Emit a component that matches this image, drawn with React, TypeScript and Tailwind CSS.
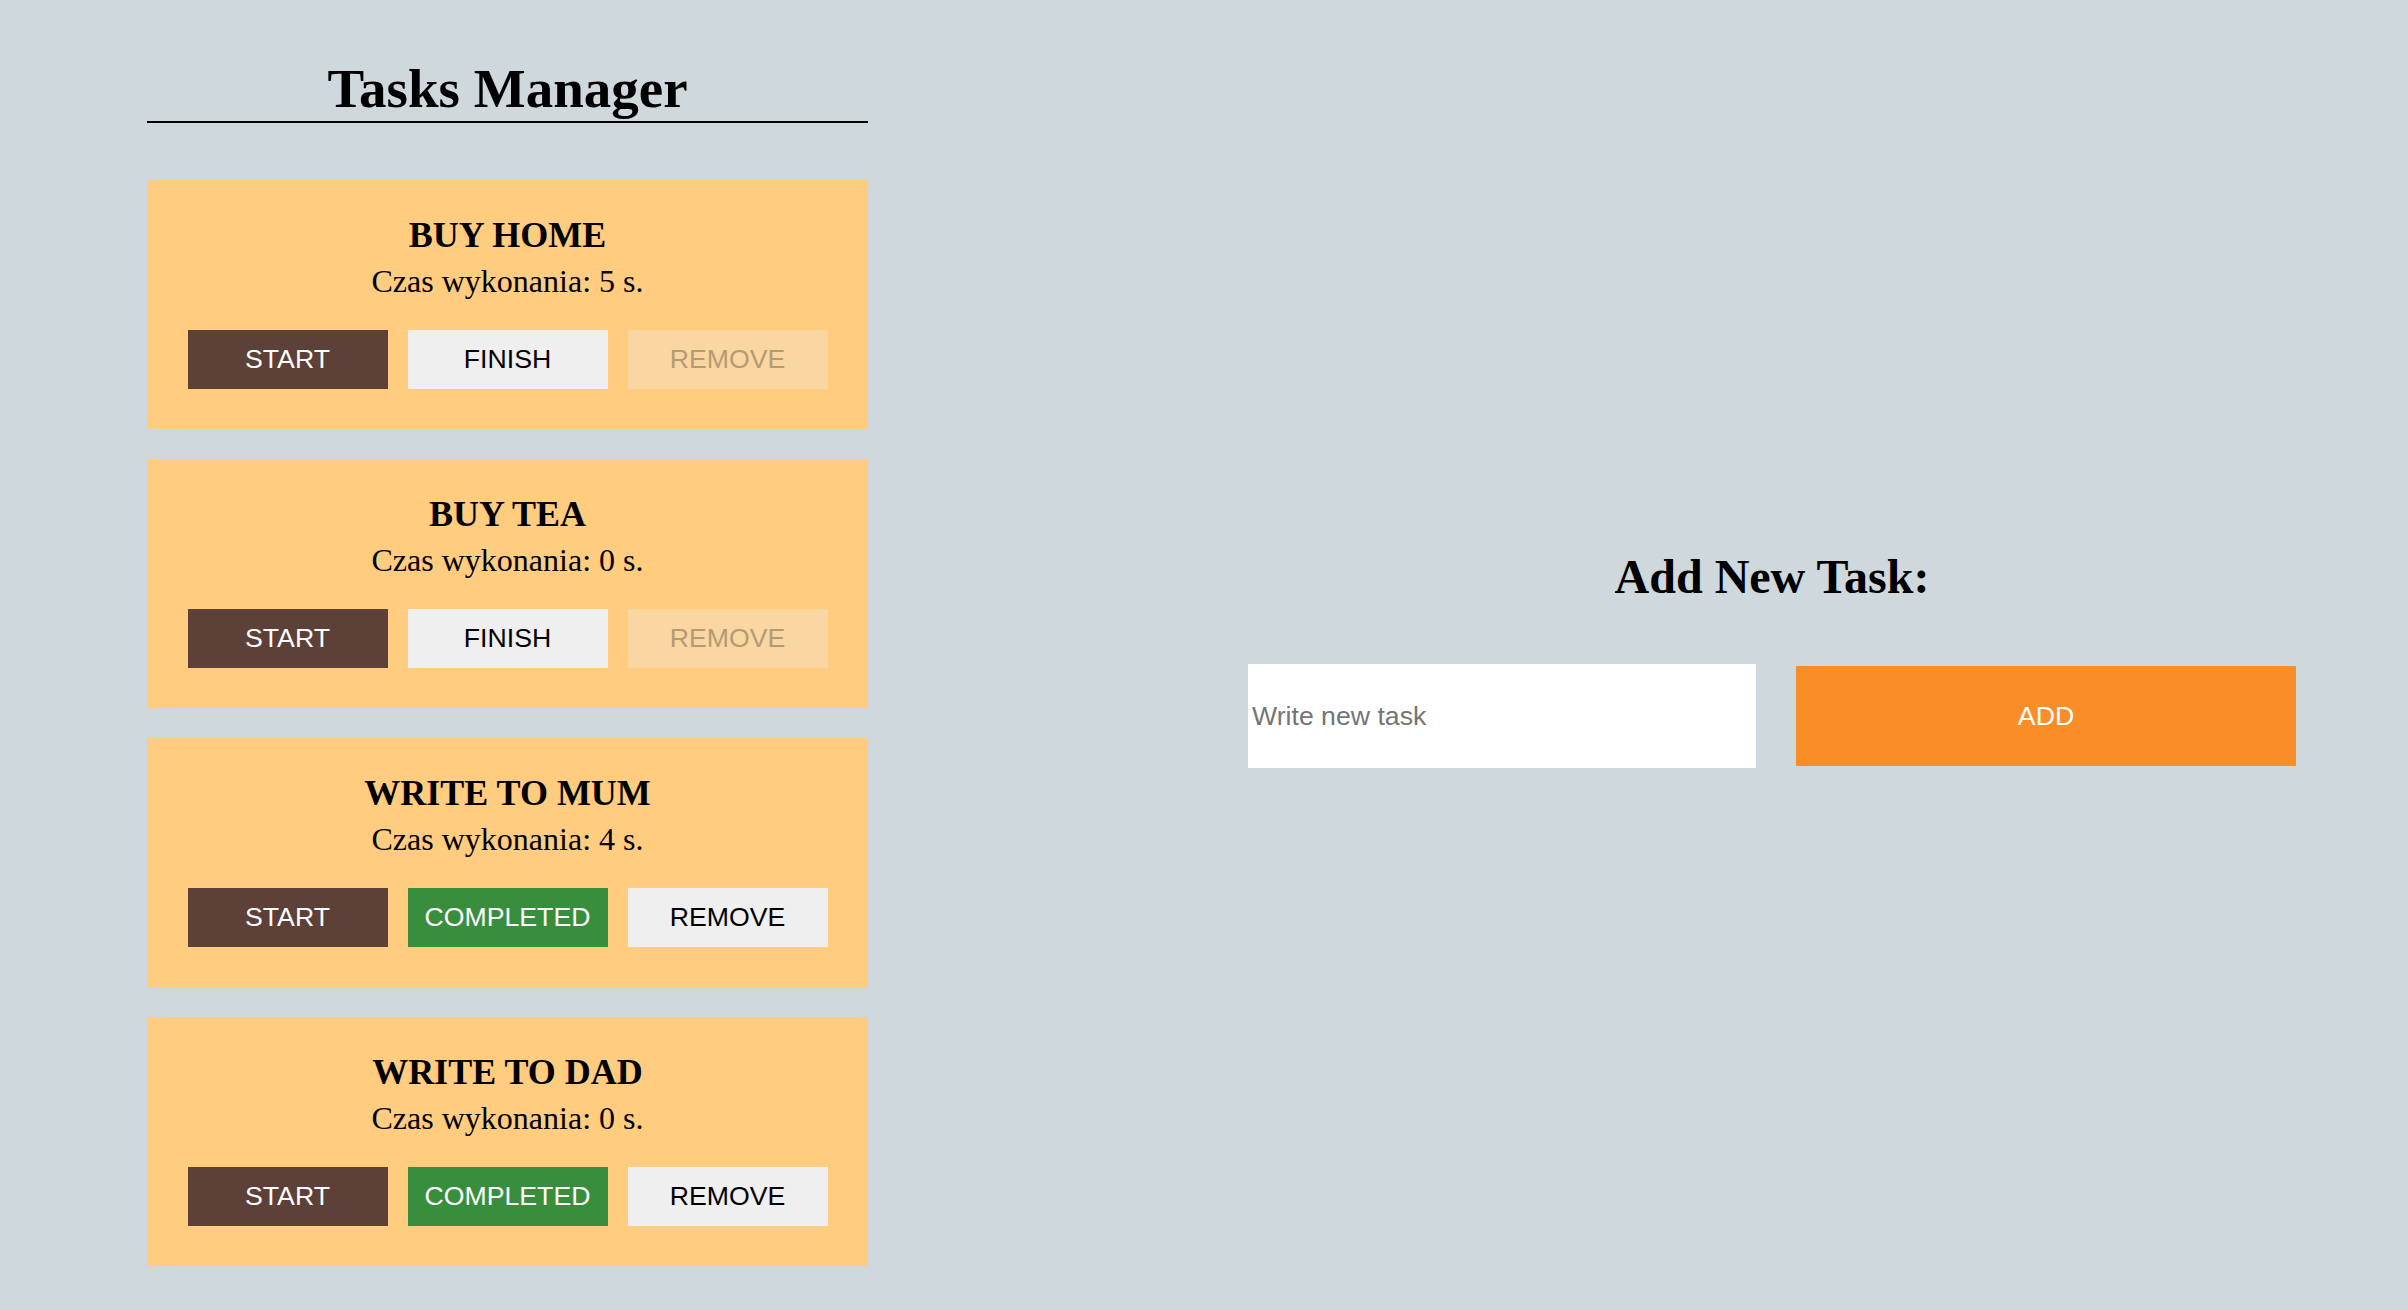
import { useState } from 'react';

// Shape of a single task shown in the list.
interface Task {
  id: number;
  name: string;
  time: number;
  status: 'idle' | 'completed';
}

const initialTasks: Task[] = [
  { id: 1, name: 'BUY HOME', time: 5, status: 'idle' },
  { id: 2, name: 'BUY TEA', time: 0, status: 'idle' },
  { id: 3, name: 'WRITE TO MUM', time: 4, status: 'completed' },
  { id: 4, name: 'WRITE TO DAD', time: 0, status: 'completed' },
];

const serif = "font-['Liberation_Serif','Times_New_Roman',serif]";
const sans = "font-['Liberation_Sans',Arial,sans-serif]";
const btn = `w-[200px] h-[59px] text-[26.67px] leading-none ${sans}`;

function TaskCard({ task }: { task: Task }) {
  const done = task.status === 'completed';
  return (
    <div className="bg-[#ffcc80] h-[249px] pt-[37px] flex flex-col items-center">
      <h3 className={`${serif} text-[36px] leading-none font-bold text-black`}>{task.name}</h3>
      <p className={`${serif} text-[32px] leading-none mt-[12px] text-black`}>
        Czas wykonania: {task.time} s.
      </p>
      <div className="flex gap-[20px] mt-[33px]">
        <button className={`${btn} bg-[#5d4037] text-white`}>START</button>
        {done ? (
          <button className={`${btn} bg-[#388e3c] text-white`}>COMPLETED</button>
        ) : (
          <button className={`${btn} bg-[#efefef] text-black`}>FINISH</button>
        )}
        {/* Remove is only available once the task is completed */}
        {done ? (
          <button className={`${btn} bg-[#efefef] text-black`}>REMOVE</button>
        ) : (
          <button disabled className={`${btn} bg-[#fad6a1] text-[#b49b76]`}>REMOVE</button>
        )}
      </div>
    </div>
  );
}

export default function App() {
  const [tasks] = useState<Task[]>(initialTasks);
  const [text, setText] = useState('');

  return (
    <div className="min-h-screen w-full bg-[#cfd8dc] flex text-black">
      {/* Left column: task list */}
      <div className="ml-[147px] w-[721px] shrink-0">
        <h1
          className={`${serif} mt-[61px] text-[55px] leading-none font-bold text-center pb-[5px] border-b-2 border-black`}
        >
          Tasks Manager
        </h1>
        <div className="mt-[57px] flex flex-col gap-[30px]">
          {tasks.map((task) => (
            <TaskCard key={task.id} task={task} />
          ))}
        </div>
      </div>

      {/* Right column: add form */}
      <div className="ml-[380px] w-[1048px] shrink-0 pt-[553px]">
        <h2 className={`${serif} text-[48px] leading-none font-bold text-center`}>Add New Task:</h2>
        <div className="mt-[63px] flex items-center gap-[40px]">
          <input
            value={text}
            onChange={(e) => setText(e.target.value)}
            placeholder="Write new task"
            className={`${sans} w-[508px] h-[104px] bg-white pl-[4px] text-[26.67px] outline-none placeholder:text-[#757575]`}
          />
          <button className={`${sans} w-[500px] h-[100px] bg-[#f98d27] text-white text-[26.67px]`}>ADD</button>
        </div>
      </div>
    </div>
  );
}
